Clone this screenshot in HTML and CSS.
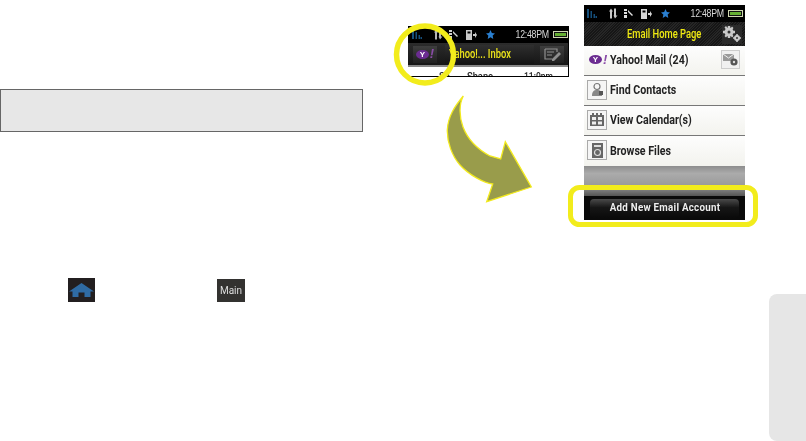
FILE: index.html
```html
<!DOCTYPE html>
<html lang="en">
<head>
<meta charset="utf-8">
<title>Email Home Page</title>
<link rel="stylesheet" href="styles.css">
</head>
<body>
<main class="page">
  <section class="column">
    <div class="note"></div>
    <div class="icon-line">
      <span class="key key-home">
        <svg width="25" height="14" viewBox="0 0 25 14"><path fill="#2f6ba3" d="M12.500 0 25 8.500H21.500V14H15.500V9.500H9.500V14H3.500V8.500H0Z"/></svg>
      </span>
      <span class="key key-main">Main</span>
    </div>
  </section>

  <div class="phone phone-small">
    <div class="status">
      <svg class="signal" width="10" height="9" viewBox="0 0 10 9"><path fill="#1d6aa5" d="M0 0H2V9H0ZM3.500 2H5V9H3.500ZM6.500 5H8V9H6.500ZM8.500 7H10V9H8.500Z"/></svg>
      <svg class="st st-a" width="9" height="11" viewBox="0 0 9 10"><path fill="#b5b5b5" d="M2 0 4 3H3V10H1V3H0ZM5 0H7V7H8.500L6 10 4.500 7H5Z"/></svg>
      <svg class="st st-b" width="9" height="9" viewBox="0 0 9 9"><path fill="#d0d0d0" d="M0 0H3V2H0ZM0 3H3V5H0ZM0 6H3V9H0ZM4 1 9 6 8 7 4 3Z"/></svg>
      <svg class="st st-c" width="11" height="10" viewBox="0 0 11 10"><path fill="#c8c8c8" d="M0 0H6V10H0ZM1.500 1.500V3.500H4.500V1.500ZM7 4H9V2L11 5 9 8V6H7Z"/></svg>
      <svg class="st st-d" width="9" height="9" viewBox="0 0 10 10"><path fill="#2a7fd0" d="M5 0 6.500 3.400 10 3.800 7.400 6.200 8.100 10 5 8 1.900 10 2.600 6.200 0 3.800 3.500 3.400Z"/></svg>
      <span class="clock">12:48PM</span>
      <span class="battery"><i></i></span>
    </div>
    <div class="head head-small">
      <span class="btn btn-y"><span class="y-logo"><b>Y</b></span><em>!</em></span>
      <span class="title-box"><span class="title-small">Yahoo!... Inbox</span></span>
      <span class="btn btn-edit">
        <svg width="17" height="13" viewBox="0 0 17 13"><path fill="none" stroke="#8f8f8f" stroke-width="1.200" d="M1 1H13V4M1 1V11H8M3 4H10M3 7H8"/><path fill="#8f8f8f" d="M15 4 17 6 10 13H8V11Z"/></svg>
      </span>
    </div>
    <div class="cut-row"><span class="cut-a">Sh</span><span class="cut-b">Shane</span><span class="cut-c">11:0pm</span></div>
  </div>

  <div class="phone phone-large">
    <div class="status">
      <svg class="signal" width="10" height="9" viewBox="0 0 10 9"><path fill="#1d6aa5" d="M0 0H2V9H0ZM3.500 2H5V9H3.500ZM6.500 5H8V9H6.500ZM8.500 7H10V9H8.500Z"/></svg>
      <svg class="st st-a" width="9" height="11" viewBox="0 0 9 10"><path fill="#c8c8c8" d="M2 0 4 3H3V10H1V3H0ZM5 0H7V7H8.500L6 10 4.500 7H5Z"/></svg>
      <svg class="st st-b" width="9" height="9" viewBox="0 0 9 9"><path fill="#e0e0e0" d="M0 0H3V2H0ZM0 3H3V5H0ZM0 6H3V9H0ZM4 1 9 6 8 7 4 3Z"/></svg>
      <svg class="st st-c" width="11" height="10" viewBox="0 0 11 10"><path fill="#d5d5d5" d="M0 0H6V10H0ZM1.500 1.500V3.500H4.500V1.500ZM7 4H9V2L11 5 9 8V6H7Z"/></svg>
      <svg class="st st-d" width="9" height="9" viewBox="0 0 10 10"><path fill="#2a7fd0" d="M5 0 6.500 3.400 10 3.800 7.400 6.200 8.100 10 5 8 1.900 10 2.600 6.200 0 3.800 3.500 3.400Z"/></svg>
      <span class="clock">12:48PM</span>
      <span class="battery"><i></i></span>
    </div>
    <div class="head head-large">
      <span class="head-title">Email Home Page</span>
      <span class="gear-btn">
        <svg width="20" height="16" viewBox="0 0 20 16"><g fill="#c9c9c9"><circle cx="7" cy="6" r="4.500"/><path d="M5.800 0H8.200V12H5.800ZM1 4.800H13V7.200H1ZM2.500 1.500 4 0 11.500 10 10 11.500ZM10 .5 11.500 2 4 11.500 2.500 10Z"/><circle cx="15" cy="12" r="3"/><path d="M14.200 8H15.800V16H14.200ZM11 11.200H19V12.800H11Z"/></g><circle cx="7" cy="6" r="1.500" fill="#333"/><circle cx="15" cy="12" r="1" fill="#333"/></svg>
      </span>
    </div>
    <ul class="rows">
      <li class="row row-yahoo">
        <span class="yahoo-mark"><span class="y-logo"><b>Y</b></span><em>!</em></span>
        <span class="row-text">Yahoo! Mail (24)</span>
        <span class="mail-btn">
          <svg width="15" height="12" viewBox="0 0 15 12"><path fill="#9a9a9a" d="M0 0H11V7H0Z"/><path fill="none" stroke="#eee" d="M0 0 5.500 4 11 0"/><circle cx="11" cy="8" r="3.600" fill="#555"/><circle cx="11" cy="8" r="1.200" fill="#ddd"/></svg>
        </span>
      </li>
      <li class="row">
        <span class="row-icon">
          <svg width="13" height="15" viewBox="0 0 13 15"><circle cx="6" cy="4.500" r="3" fill="none" stroke="#777" stroke-width="1.200"/><path fill="#888" d="M1 14C1 9 3 8 6 8S11 9 11 14Z"/><path fill="#555" d="M8 9H12V13H8Z"/></svg>
        </span>
        <span class="row-text">Find Contacts</span>
      </li>
      <li class="row">
        <span class="row-icon">
          <svg width="14" height="13" viewBox="0 0 14 13"><path fill="#666" d="M0 2H14V13H0ZM2 0H4V2H2ZM6 0H8V2H6ZM10 0H12V2H10Z"/><path fill="#eee" d="M2 4H6V7H2ZM8 4H12V7H8ZM2 8.500H6V11.500H2ZM8 8.500H12V11.500H8Z"/></svg>
        </span>
        <span class="row-text">View Calendar(s)</span>
      </li>
      <li class="row">
        <span class="row-icon">
          <svg width="11" height="15" viewBox="0 0 11 15"><path fill="#666" d="M0 0H11V15H0Z"/><path fill="#ddd" d="M2 2H9V4H2Z"/><circle cx="5.500" cy="9.500" r="3" fill="none" stroke="#ddd" stroke-width="1.200"/></svg>
        </span>
        <span class="row-text">Browse Files</span>
      </li>
    </ul>
    <div class="band"></div>
    <div class="foot"><span class="foot-btn"><span class="foot-label">Add New Email Account</span></span></div>
  </div>

  <svg class="marks" width="806" height="441" viewBox="0 0 806 441">
    <circle cx="425" cy="54.500" r="28.500" fill="none" stroke="#f2ec1c" stroke-width="5.500"/>
    <path fill="#999c4b" stroke="#f2ea1e" stroke-width="1.300" d="M463.300 96C459 104 459 116 463 127C468 140 477 149 490 156L500.700 159 505.300 141.700 531.300 187 486.700 201.700 492.700 184C484 183 469 175 460 165C452 156 447 142 447.300 130C448 116 455 106 463.300 96Z"/>
    <rect x="570.500" y="187.500" width="185" height="37" rx="9" fill="none" stroke="#f2ec1c" stroke-width="5"/>
  </svg>

  <aside class="tab"></aside>
</main>
</body>
</html>
```
FILE: styles.css
```css
* { box-sizing: border-box; }
html, body { margin: 0; padding: 0; background: #fff; }
body { width: 806px; height: 441px; overflow: hidden; font-family: Roboto, "Liberation Sans", sans-serif; }
ul { list-style: none; margin: 0; padding: 0; }

.page { position: relative; width: 806px; height: 441px; overflow: hidden; }

.column { width: 363px; padding-top: 89px; display: flex; flex-direction: column; }
.note { height: 43px; background: #e7e7e7; border: 1px solid #666; border-width: 1px 1.500px 1.500px 1px; }
.icon-line { display: flex; align-items: flex-start; gap: 122px; margin-top: 146px; padding-left: 68px; }
.key { display: flex; align-items: center; justify-content: center; }
.key-home { width: 27px; height: 24px; background: #231f20; }
.key-main { width: 28px; height: 23px; margin-top: 1px; background: #333230; color: #dedede; font-size: 10px; filter: blur(.3px); }

.phone { position: absolute; width: 161px; overflow: hidden; background: #000; display: flex; flex-direction: column; filter: blur(.35px); }
.phone-small { left: 408px; top: 26px; height: 51px; border-right: 1px solid #000; border-bottom: 1px solid #000; }
.phone-large { left: 584px; top: 5px; height: 215px; background: #fff; }

.status { height: 17px; flex: none; background: #000; display: flex; align-items: center; padding: 0 0 0 4px; }
.phone-large .status { padding: 0 2px 0 3px; }
.status .signal { margin-right: 12px; opacity: .75; }
.st-a { margin-right: 6px; }
.st-b { margin-right: 8px; }
.st-c { margin-right: 9px; }
.clock { margin-left: auto; color: #d8d8d8; font-family: "Liberation Sans", sans-serif; font-size: 10px; line-height: 12px; white-space: nowrap; letter-spacing: -.3px; transform: scaleX(.88); transform-origin: right center; }
.battery { margin-left: 4px; width: 15px; height: 7px; border: 1px solid #cfd8b0; background: #111; padding: 1px; display: block; }
.battery i { display: block; height: 100%; background: #66b032; }

.head { flex: none; display: flex; align-items: center; }
.head-small { height: 24px; padding: 0 4px 0 5px; gap: 8px; background: linear-gradient(#2c2c2c, #161616); border-bottom: 2px solid #888; }
.btn { flex: none; width: 24px; height: 17px; display: flex; align-items: center; justify-content: center; background: linear-gradient(#3e3e3e, #202020); }
.title-box { flex: none; width: 89px; height: 19px; padding-left: 4px; margin-right: -2px; background: linear-gradient(#2f2f2f, #141414); color: #ece41a; font-size: 12px; font-weight: 500; line-height: 19px; white-space: nowrap; }
.title-small { display: inline-block; transform: scaleX(.78); transform-origin: left center; }

.y-logo { display: inline-flex; align-items: center; justify-content: center; width: 13px; height: 9px; border-radius: 50%; background: #6b2c91; }
.y-logo b { color: #fff; font-family: "Liberation Sans", sans-serif; font-size: 8px; line-height: 9px; font-weight: 700; }
.btn em, .yahoo-mark em { color: #8a4ca8; font-family: "Liberation Sans", sans-serif; font-style: italic; font-weight: 700; font-size: 13px; line-height: 12px; margin-left: 1px; }

.cut-row { flex: 1; position: relative; background: #fff; overflow: hidden; display: flex; align-items: flex-start; color: #222; font-size: 11px; font-weight: 500; line-height: 10px; padding: 5px 0 0 31px; }
.cut-a, .cut-b, .cut-c { display: inline-block; transform: scaleX(.85); transform-origin: left center; }
.cut-a { width: 28px; }
.cut-b { width: 57px; }
.cut-c { font-size: 10px; }

.head-large { height: 24px; background: repeating-linear-gradient(135deg, #161616 0 1px, #262626 1px 2px); padding-right: 6px; }
.head-title { margin-left: 43px; color: #f0ea12; font-size: 12px; font-weight: 500; white-space: nowrap; transform: scaleX(.78); transform-origin: left center; }
.gear-btn { margin-left: auto; width: 24px; height: 19px; display: flex; align-items: center; justify-content: center; background: #2a2a2a; }

.rows { flex: none; display: flex; flex-direction: column; }
.row { height: 30px; display: flex; align-items: center; padding: 0 5px 2px 3px; background: linear-gradient(#fdfdfd, #f3f3ee); border-bottom: 1px solid #777; }
.row:last-child { border-bottom: 0; }
.row-icon { flex: none; width: 20px; height: 20px; margin-right: 3px; display: flex; align-items: center; justify-content: center; border: 1px solid #aaa; background: #f5f5f5; }
.row-text { color: #222; font-size: 13px; font-weight: 700; white-space: nowrap; transform: scaleX(.82); transform-origin: left center; }
.yahoo-mark { flex: none; width: 23px; padding-left: 2px; display: flex; align-items: center; }
.mail-btn { margin-left: auto; width: 19px; height: 19px; display: flex; align-items: center; justify-content: center; background: #f0f0f0; border: 1px solid #ccc; }

.band { flex: none; height: 30px; background: linear-gradient(#8d8d8d, #ababab 25%, #9a9a9a 65%, #555); }
.foot { flex: 1; background: #0a0a0a; display: flex; align-items: flex-start; justify-content: center; }
.foot-btn { width: 149px; height: 19px; margin-top: 3px; border-radius: 4px; text-align: center; background: linear-gradient(#4a4a4a, #161616 45%, #0a0a0a); color: #eee; font-size: 11.500px; font-weight: 700; line-height: 16px; white-space: nowrap; }
.foot-label { display: inline-block; transform: scaleX(.85); letter-spacing: .3px; }

.marks { position: absolute; left: 0; top: 0; pointer-events: none; }
.tab { position: absolute; left: 769px; top: 294px; width: 37px; height: 147px; background: #e6e6e6; border-radius: 8px 0 0 8px; }
```
